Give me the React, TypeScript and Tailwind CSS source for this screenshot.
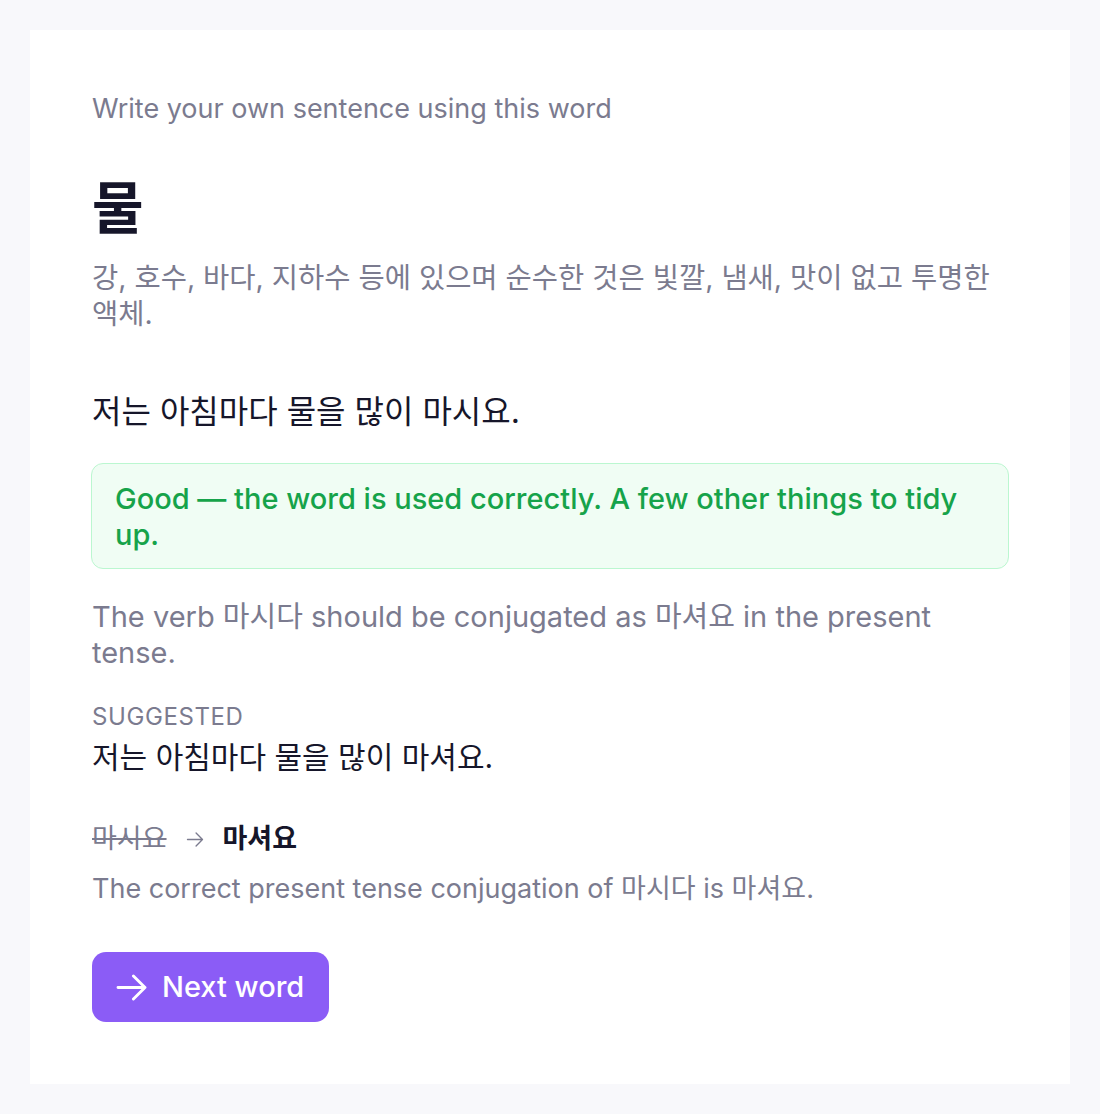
const font = { fontFamily: '"Inter", "Noto Sans CJK KR", sans-serif' }

function Arrow({ className, width = 3 }: { className?: string; width?: number }) {
  return (
    <svg viewBox="0 0 32 28" fill="none" stroke="currentColor" strokeWidth={width} strokeLinecap="round" strokeLinejoin="round" className={className}>
      <path d="M2 14H30M18 2L30 14L18 26" />
    </svg>
  )
}

export default function App() {
  return (
    <div className="min-h-screen bg-[#f8f8fb] p-[30px]" style={font}>
      <div className="bg-white px-[62px] pt-[62px] pb-[62px]">
        {/* Prompt */}
        <p className="text-[27px] leading-[34px] text-[#7b7b8f]">
          Write your own sentence using this word
        </p>

        {/* Word + definition */}
        <h1 className="mt-[49px] text-[56px] leading-[67px] font-bold text-[#16162a]">물</h1>
        <p className="mt-[18px] text-[28.5px] leading-[36px] text-[#7b7b8f]">
          강, 호수, 바다, 지하수 등에 있으며 순수한 것은 빛깔, 냄새, 맛이 없고 투명한 액체.
        </p>

        {/* User sentence */}
        <p className="mt-[60px] text-[32px] leading-[40px] text-[#16162a]">
          저는 아침마다 물을 많이 마시요.
        </p>

        {/* Verdict */}
        <div className="-mx-px mt-[31px] rounded-[12px] border border-[#bbf7d0] bg-[#f0fdf4] pl-[23px] pr-6 pt-[17px] pb-[15px]">
          <p className="text-[29px] leading-[36px] font-medium text-[#16a34a]">
            Good — the word is used correctly. A few other things to tidy up.
          </p>
        </div>

        <p className="mt-[30px] text-[29px] leading-[36px] text-[#7b7b8f]">
          The verb 마시다 should be conjugated as 마셔요 in the present tense.
        </p>

        {/* Suggestion */}
        <p className="mt-[32px] text-[24px] leading-[28px] tracking-wide uppercase text-[#7b7b8f]">
          Suggested
        </p>
        <p className="mt-[7px] text-[30px] leading-[38px] text-[#16162a]">
          저는 아침마다 물을 많이 마셔요.
        </p>

        {/* Correction detail */}
        <div className="mt-[46px] flex items-center gap-[17px] text-[27px] leading-[34px]">
          <span className="text-[#7b7b8f] line-through">마시요</span>
          <Arrow className="h-[15px] w-[22px] text-[#7b7b8f]" width={2.5} />
          <span className="font-bold text-[#16162a]">마셔요</span>
        </div>
        <p className="mt-[16px] text-[27px] leading-[34px] text-[#7b7b8f]">
          The correct present tense conjugation of 마시다 is 마셔요.
        </p>

        {/* Next */}
        <button className="mt-[46px] flex h-[70px] items-center gap-[15px] rounded-[14px] bg-[#8b5cf6] pl-6 pr-[25px] text-[29px] font-medium text-white">
          <Arrow className="h-[27px] w-[31px]" />
          Next word
        </button>
      </div>
    </div>
  )
}
